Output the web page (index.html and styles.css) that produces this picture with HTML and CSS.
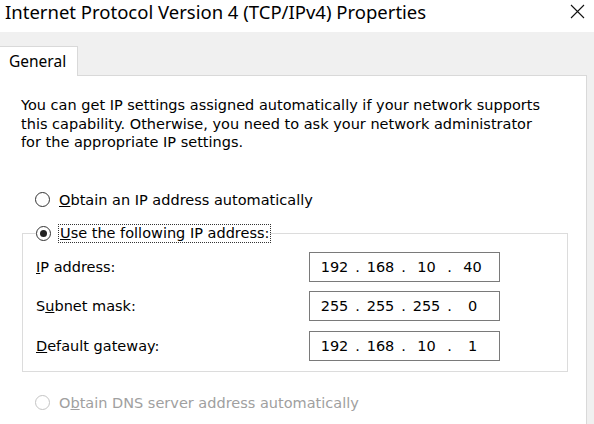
FILE: index.html
```html
<!DOCTYPE html>
<html lang="en">
<head>
    <meta charset="UTF-8">
    <title>Internet Protocol Version 4 (TCP/IPv4) Properties</title>
    <link rel="stylesheet" href="styles.css">
</head>
<body>
    <div class="titlebar">
        <span class="title">Internet Protocol Version 4 (TCP/IPv4) Properties</span>
        <svg class="close" width="15" height="15" viewBox="0 0 15 15">
            <path d="M1 1 L14 14 M14 1 L1 14" stroke="#111" stroke-width="1.1" fill="none"/>
        </svg>
    </div>
    <div class="tabs">
        <div class="tab">General</div>
    </div>
    <div class="panel">
        <p class="intro">You can get IP settings assigned automatically if your network supports<br>this capability. Otherwise, you need to ask your network administrator<br>for the appropriate IP settings.</p>

        <div class="radio-row first">
            <span class="radio"></span>
            <span class="label"><u>O</u>btain an IP address automatically</span>
        </div>

        <fieldset class="group">
            <legend class="radio-row">
                <span class="radio checked"></span>
                <span class="label focus"><u>U</u>se the following IP address:</span>
            </legend>
            <div class="fields">
                <div class="field-label"><u>I</u>P address:</div>
                <div class="ip">
                    <span class="oct">192</span><span class="dot">.</span><span class="oct">168</span><span class="dot">.</span><span class="oct">10</span><span class="dot">.</span><span class="oct">40</span>
                </div>
                <div class="field-label">S<u>u</u>bnet mask:</div>
                <div class="ip">
                    <span class="oct">255</span><span class="dot">.</span><span class="oct">255</span><span class="dot">.</span><span class="oct">255</span><span class="dot">.</span><span class="oct">0</span>
                </div>
                <div class="field-label"><u>D</u>efault gateway:</div>
                <div class="ip">
                    <span class="oct">192</span><span class="dot">.</span><span class="oct">168</span><span class="dot">.</span><span class="oct">10</span><span class="dot">.</span><span class="oct">1</span>
                </div>
            </div>
        </fieldset>

        <div class="radio-row disabled">
            <span class="radio"></span>
            <span class="label">O<u>b</u>tain DNS server address automatically</span>
        </div>
    </div>
</body>
</html>
```

FILE: styles.css
```css
body {
    margin: 0;
    padding: 0;
    background: #f0f0f0;
    font-family: "DejaVu Sans", sans-serif;
    font-size: 14.5px;
    color: #000;
    overflow: hidden;
}
.titlebar {
    background: #fff;
    height: 32px;
    display: flex;
    align-items: center;
    justify-content: space-between;
    padding: 0 9px 0 5px;
}
.title {
    font-family: "Noto Sans", sans-serif;
    font-size: 18.5px;
    margin-top: -10px;
}
.close {
    margin-top: -10px;
}
.tabs {
    height: 43px;
    display: flex;
    align-items: flex-end;
}
.tab {
    width: 78px;
    height: 30px;
    box-sizing: border-box;
    background: #fff;
    border: 1px solid #d9d9d9;
    border-left: none;
    border-bottom: none;
    margin-bottom: -1px;
    position: relative;
    font-family: "Noto Sans", sans-serif;
    font-size: 15.5px;
    padding: 3px 0 0 9px;
}
.panel {
    background: #fff;
    width: 587px;
    height: 349px;
    border-top: 1px solid #d9d9d9;
    border-right: 1px solid #d9d9d9;
    padding: 0 0 0 21px;
    box-sizing: border-box;
}
.intro {
    margin: 20px 0 0;
    line-height: 18.5px;
    white-space: nowrap;
}
.radio-row {
    display: flex;
    align-items: center;
    gap: 8px;
    height: 18px;
    padding-left: 14px;
}
.radio-row.first {
    margin-top: 39px;
}
.radio {
    width: 15px;
    height: 15px;
    box-sizing: border-box;
    border: 1px solid #333;
    border-radius: 50%;
    display: flex;
    align-items: center;
    justify-content: center;
}
.radio.checked::after {
    content: "";
    width: 7px;
    height: 7px;
    border-radius: 50%;
    background: #222;
}
.label {
    padding: 0 1px;
}
.label.focus {
    outline: 1px dotted #333;
    outline-offset: 0;
    line-height: 17px;
}
.group {
    margin: 16px 0 0 1px;
    width: 546px;
    box-sizing: border-box;
    border: 1px solid #dcdcdc;
    padding: 9px 0 10px 13px;
}
.group legend.radio-row {
    padding: 0;
    margin-left: 0;
    gap: 8px;
}
.fields {
    display: grid;
    grid-template-columns: 273px 191px;
    grid-auto-rows: 30px;
    row-gap: 9.5px;
    align-items: center;
}
.ip {
    height: 30px;
    box-sizing: border-box;
    border: 1px solid #7a7a7a;
    display: flex;
    align-items: center;
    padding-left: 8px;
}
.oct {
    width: 33px;
    text-align: center;
}
.dot {
    width: 13px;
    text-align: center;
}
.radio-row.disabled {
    margin-top: 22px;
    color: #a0a0a0;
}
.radio-row.disabled .radio {
    border-color: #c4c4c4;
}
```
